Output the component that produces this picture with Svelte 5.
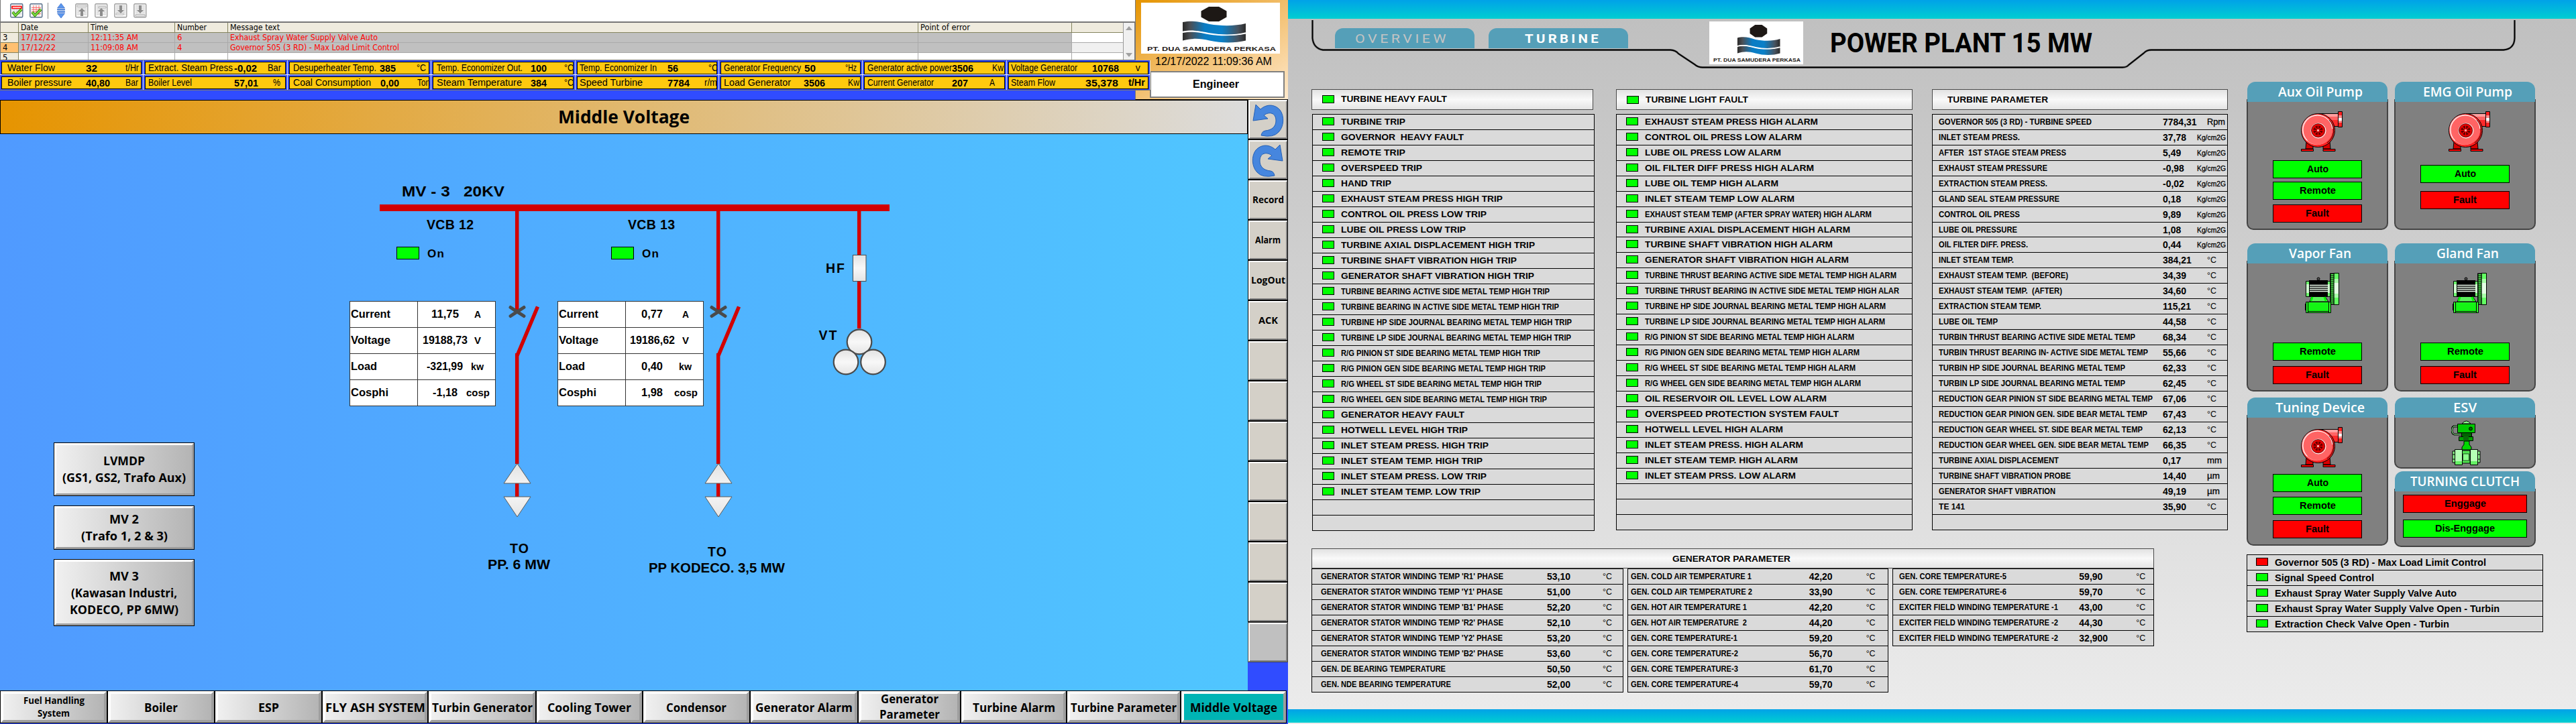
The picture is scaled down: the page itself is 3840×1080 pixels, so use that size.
<script>
  // Stretches a label horizontally to the given width in pixels.
  function fit(node, width) {
    if (!width) return;
    const natural = node.getBoundingClientRect().width;
    if (!natural) return;
    node.style.transform = `scaleX(${width / natural})`;
    node.style.marginRight = `${width - natural}px`;
  }

  // left edge, label, width, value x, value, width, unit x, unit, width
  const status = [
    [2, 11, 'Water Flow', 71, 128, '32', 17, 187, 't/Hr', 20],
    [216, 221, 'Extract. Steam Press', 126, 349, '-0,02', 34, 399, 'Bar', 20],
    [431, 437, 'Desuperheater Temp.', 124, 566, '385', 24, 621, '°C', 14],
    [645, 651, 'Temp. Economizer Out.', 128, 791, '100', 24, 841, '°C', 14],
    [860, 864, 'Temp. Economizer In', 115, 995, '56', 16, 1056, '°C', 14],
    [1074, 1079, 'Generator Frequency', 115, 1199, '50', 17, 1260, '°Hz', 17],
    [1288, 1293, 'Generator active power', 126, 1419, '3506', 32, 1479, 'Kw', 17],
    [1503, 1507, 'Voltage Generator', 99, 1628, '10768', 40, 1693, 'v', 7],
    [2, 11, 'Boiler pressure', 96, 128, '40,80', 36, 187, 'Bar', 19],
    [216, 221, 'Boiler Level', 65, 349, '57,01', 36, 407, '%', 11],
    [431, 437, 'Coal Consumption', 116, 567, '0,00', 28, 622, 'Ton', 19],
    [645, 651, 'Steam Temperature', 127, 791, '384', 24, 841, '°C', 14],
    [860, 864, 'Speed Turbine', 94, 995, '7784', 33, 1050, 'r/m', 19],
    [1074, 1079, 'Load Generator', 100, 1198, '3506', 32, 1264, 'Kw', 17],
    [1288, 1293, 'Current Generator', 99, 1419, '207', 24, 1475, 'A', 8],
    [1503, 1507, 'Steam Flow', 66, 1618, '35,378', 49, 1682, 't/Hr', 25]
  ];

  const sideButtons = ['undo', 'redo', 'Record', 'Alarm', 'LogOut', 'ACK', '', '', '', '', '', '', '', ''];
  const sideWidths = { Record: 47, Alarm: 38, LogOut: 51, ACK: 29 };

  const nav = [
    [160, ['Fuel Handling', 'System'], [91, 48]],
    [160, ['Boiler'], [50]],
    [160, ['ESP'], [31]],
    [158, ['FLY ASH SYSTEM'], [149]],
    [161, ['Turbin Generator'], [150]],
    [159, ['Cooling Tower'], [125]],
    [160, ['Condensor'], [90]],
    [161, ['Generator Alarm'], [145]],
    [153, ['Generator', 'Parameter'], [86, 90]],
    [158, ['Turbine Alarm'], [123]],
    [170, ['Turbine Parameter'], [158]],
    [158, ['Middle Voltage'], [130]]
  ];

  const menu = [
    [80, [['LVMDP', 62], ['(GS1, GS2, Trafo Aux)', 184]]],
    [66, [['MV 2', 44], ['(Trafo 1, 2 & 3)', 129]]],
    [100, [['MV 3', 44], ['(Kawasan Industri,', 158], ['KODECO, PP 6MW)', 162]]]
  ];

  const meters = [
    ['m1', [['Current', 59, '11,75', 41, 'A', 10], ['Voltage', 59, '19188,73', 67, 'V', 10], ['Load', 39, '-321,99', 54, 'kw', 19], ['Cosphi', 56, '-1,18', 37, 'cosp', 35]]],
    ['m2', [['Current', 59, '0,77', 32, 'A', 10], ['Voltage', 59, '19186,62', 67, 'V', 10], ['Load', 39, '0,40', 32, 'kw', 19], ['Cosphi', 56, '1,98', 32, 'cosp', 35]]]
  ];

  // label, width, narrow type
  const heavy = [
    ['TURBINE TRIP', 96], ['GOVERNOR  HEAVY FAULT', 183], ['REMOTE TRIP', 96], ['OVERSPEED TRIP', 121], ['HAND TRIP', 75],
    ['EXHAUST STEAM PRESS HIGH TRIP', 241], ['CONTROL OIL PRESS LOW TRIP', 217], ['LUBE OIL PRESS LOW TRIP', 186],
    ['TURBINE AXIAL DISPLACEMENT HIGH TRIP', 289], ['TURBINE SHAFT VIBRATION HIGH TRIP', 262], ['GENERATOR SHAFT VIBRATION HIGH TRIP', 288],
    ['TURBINE BEARING ACTIVE SIDE METAL TEMP HIGH TRIP', 311, 1], ['TURBINE BEARING IN ACTIVE SIDE METAL TEMP HIGH TRIP', 325, 1],
    ['TURBINE HP SIDE JOURNAL BEARING METAL TEMP HIGH TRIP', 344, 1], ['TURBINE LP SIDE JOURNAL BEARING METAL TEMP HIGH TRIP', 343, 1],
    ['R/G PINION ST SIDE BEARING METAL TEMP HIGH TRIP', 297, 1], ['R/G PINION GEN SIDE BEARING METAL TEMP HIGH TRIP', 305, 1],
    ['R/G WHEEL ST SIDE BEARING METAL TEMP HIGH TRIP', 299, 1], ['R/G WHEEL GEN SIDE BEARING METAL TEMP HIGH TRIP', 307, 1],
    ['GENERATOR HEAVY FAULT', 184], ['HOTWELL LEVEL HIGH TRIP', 189], ['INLET STEAM PRESS. HIGH TRIP', 220],
    ['INLET STEAM TEMP. HIGH TRIP', 211], ['INLET STEAM PRESS. LOW TRIP', 217], ['INLET STEAM TEMP. LOW TRIP', 208], null, null
  ];
  const light = [
    ['EXHAUST STEAM PRESS HIGH ALARM', 258], ['CONTROL OIL PRESS LOW ALARM', 234], ['LUBE OIL PRESS LOW ALARM', 203],
    ['OIL FILTER DIFF PRESS HIGH ALARM', 252], ['LUBE OIL TEMP HIGH ALARM', 199], ['INLET STEAM TEMP LOW ALARM', 223],
    ['EXHAUST STEAM TEMP (AFTER SPRAY WATER) HIGH ALARM', 338, 1], ['TURBINE AXIAL DISPLACEMENT HIGH ALARM', 306],
    ['TURBINE SHAFT VIBRATION HIGH ALARM', 280], ['GENERATOR SHAFT VIBRATION HIGH ALARM', 304],
    ['TURBINE THRUST BEARING ACTIVE SIDE METAL TEMP HIGH ALARM', 375, 1], ['TURBINE THRUST BEARING IN ACTIVE SIDE METAL TEMP HIGH ALAR', 379, 1],
    ['TURBINE HP SIDE JOURNAL BEARING METAL TEMP HIGH ALARM', 359, 1], ['TURBINE LP SIDE JOURNAL BEARING METAL TEMP HIGH ALARM', 358, 1],
    ['R/G PINION ST SIDE BEARING METAL TEMP HIGH ALARM', 312, 1], ['R/G PINION GEN SIDE BEARING METAL TEMP HIGH ALARM', 320, 1],
    ['R/G WHEEL ST SIDE BEARING METAL TEMP HIGH ALARM', 314, 1], ['R/G WHEEL GEN SIDE BEARING METAL TEMP HIGH ALARM', 322, 1],
    ['OIL RESERVOIR OIL LEVEL LOW ALARM', 271], ['OVERSPEED PROTECTION SYSTEM FAULT', 289], ['HOTWELL LEVEL HIGH ALARM', 206],
    ['INLET STEAM PRESS. HIGH ALARM', 236], ['INLET STEAM TEMP. HIGH ALARM', 228], ['INLET STEAM PRSS. LOW ALARM', 225], null, null, null
  ];
  const K = 'Kg/cm2G', C = '°C';
  const unitWidths = { [K]: 43, [C]: 14, Rpm: 27, mm: 22, 'µm': 19 };
  const params = [
    ['GOVERNOR 505 (3 RD) - TURBINE SPEED', 228, '7784,31', 'Rpm'], ['INLET STEAM PRESS.', 121, '37,78', K], ['AFTER  1ST STAGE STEAM PRESS', 190, '5,49', K],
    ['EXHAUST STEAM PRESSURE', 162, '-0,98', K], ['EXTRACTION STEAM PRESS.', 162, '-0,02', K], ['GLAND SEAL STEAM PRESSURE', 180, '0,18', K],
    ['CONTROL OIL PRESS', 121, '9,89', K], ['LUBE OIL PRESSURE', 117, '1,08', K], ['OIL FILTER DIFF. PRESS.', 133, '0,44', K],
    ['INLET STEAM TEMP.', 112, '384,21', C], ['EXHAUST STEAM TEMP.  (BEFORE)', 193, '34,39', C], ['EXHAUST STEAM TEMP.  (AFTER)', 184, '34,60', C],
    ['EXTRACTION STEAM TEMP.', 153, '115,21', C], ['LUBE OIL TEMP', 88, '44,58', C], ['TURBIN THRUST BEARING ACTIVE SIDE METAL TEMP', 293, '68,34', C],
    ['TURBIN THRUST BEARING IN- ACTIVE SIDE METAL TEMP', 312, '55,66', C], ['TURBIN HP SIDE JOURNAL BEARING METAL TEMP', 278, '62,33', C],
    ['TURBIN LP SIDE JOURNAL BEARING METAL TEMP', 278, '62,45', C], ['REDUCTION GEAR PINION ST SIDE BEARING METAL TEMP', 319, '67,06', C],
    ['REDUCTION GEAR PINION GEN. SIDE BEAR METAL TEMP', 311, '67,43', C], ['REDUCTION GEAR WHEEL ST. SIDE BEAR METAL TEMP', 304, '62,13', C],
    ['REDUCTION GEAR WHEEL GEN. SIDE BEAR METAL TEMP', 313, '66,35', C], ['TURBINE AXIAL DISPLACEMENT', 179, '0,17', 'mm'],
    ['TURBINE SHAFT VIBRATION PROBE', 197, '14,40', 'µm'], ['GENERATOR SHAFT VIBRATION', 174, '49,19', 'µm'], ['TE 141', 39, '35,90', C], null
  ];
  const generator = [
    ['ga', [["GENERATOR STATOR WINDING TEMP 'R1' PHASE", 272, '53,10'], ["GENERATOR STATOR WINDING TEMP 'Y1' PHASE", 271, '51,00'],
      ["GENERATOR STATOR WINDING TEMP 'B1' PHASE", 272, '52,20'], ["GENERATOR STATOR WINDING TEMP 'R2' PHASE", 272, '52,10'],
      ["GENERATOR STATOR WINDING TEMP 'Y2' PHASE", 271, '53,20'], ["GENERATOR STATOR WINDING TEMP 'B2' PHASE", 272, '53,60'],
      ['GEN. DE BEARING TEMPERATURE', 186, '50,50'], ['GEN. NDE BEARING TEMPERATURE', 194, '52,00']]],
    ['gb', [['GEN. COLD AIR TEMPERATURE 1', 180, '42,20'], ['GEN. COLD AIR TEMPERATURE 2', 181, '33,90'], ['GEN. HOT AIR TEMPERATURE 1', 173, '42,20'],
      ['GEN. HOT AIR TEMPERATURE  2', 173, '44,20'], ['GEN. CORE TEMPERATURE-1', 159, '59,20'], ['GEN. CORE TEMPERATURE-2', 160, '56,70'],
      ['GEN. CORE TEMPERATURE-3', 160, '61,70'], ['GEN. CORE TEMPERATURE-4', 160, '59,70']]],
    ['gc', [['GEN. CORE TEMPERATURE-5', 160, '59,90'], ['GEN. CORE TEMPERATURE-6', 160, '59,70'], ['EXCITER FIELD WINDING TEMPERATURE -1', 237, '43,00'],
      ['EXCITER FIELD WINDING TEMPERATURE -2', 237, '44,30'], ['EXCITER FIELD WINDING TEMPERATURE -2', 237, '32,900']]]
  ];

  // title, width, icon, body height, space below, buttons: label, width, gap above, on
  const R = 'Remote', A = 'Auto', F = 'Fault';
  const cards = [
    [
      ['Aux Oil Pump', 126, 'pump', 195, 20, [[A, 32, 13, 1], [R, 54, 5, 1], [F, 35, 7, 0]]],
      ['Vapor Fan', 93, 'fan', 195, 9, [[R, 54, 44, 1], [F, 35, 8, 0]]],
      ['Tuning Device', 133, 'pump', 195, 0, [[A, 32, 10, 1], [R, 54, 7, 1], [F, 35, 8, 0]]]
    ],
    [
      ['EMG Oil Pump', 133, 'pump', 195, 20, [[A, 32, 20, 1], [F, 35, 12, 0]]],
      ['Gland Fan', 93, 'fan', 195, 9, [[R, 54, 44, 1], [F, 35, 8, 0]]],
      ['ESV', 35, 'valve', 80, 4, []],
      ['TURNING CLUTCH', 163, 'clutch', 87, 0, [['Enggage', 62, 9, 0], ['Dis-Enggage', 89, 10, 1]]]
    ]
  ];
  const notes = [
    ['Governor 505 (3 RD) - Max Load Limit Control', 315, 0], ['Signal Speed Control', 148, 1], ['Exhaust Spray Water Supply Valve Auto', 271, 1],
    ['Exhaust Spray Water Supply Valve Open - Turbin', 335, 1], ['Extraction Check Valve Open - Turbin', 260, 1]
  ];
</script>

{#snippet t(text, w)}<span class="t" use:fit={w}>{text}</span>{/snippet}

{#snippet logo(id)}
  <svg class="logo" viewBox="0 0 207 76" preserveAspectRatio="none">
    <defs>
      <linearGradient id={id}>
        <stop offset="0" stop-color="#2b2a29" /><stop offset=".12" stop-color="#4a4f55" /><stop offset=".35" stop-color="#0a7cc4" />
        <stop offset=".62" stop-color="#0a80c8" /><stop offset=".88" stop-color="#47525e" /><stop offset="1" stop-color="#2b2a29" />
      </linearGradient>
    </defs>
    <rect width="207" height="76" fill="#fff" />
    <path d="M101 6h15l11.500 6.500v9l-11.500 6.500h-15l-11.500-6.500v-9z" fill="#1d1815" />
    <path d="M62 29c16-3 26 0 40 3c18 3 38 3 54-1v14c-16 4-36 4-54 1c-14-3-24-6-40-3z" fill="url(#{id})" />
    <path d="M62 45c16-3 26 0 40 2.500c18 3 38 2 54-1v10c-16 4-36 4-54 0c-14-3-24-4-40 0z" fill="url(#{id})" />
    <path d="M62 43.500c16-3 26 0 40 2.500c18 3 38 3 54-1" fill="none" stroke="#fff" stroke-width="1.600" />
    <text x="9" y="71.500" textLength="192" lengthAdjust="spacingAndGlyphs">PT. DUA SAMUDERA PERKASA</text>
  </svg>
{/snippet}

{#snippet pump()}
  <svg class="pump" width="62" height="60" viewBox="0 0 62 60">
    <path d="M8 45l-1 11h11v-5zM43 45l1 11H33v-5z" fill="#d80000" stroke="#000" />
    <path d="M.5 56.500h18v3H.5zM33 56.500h18v3H33z" fill="#f00" stroke="#000" />
    <path d="M26 3.500h30v19H47z" fill="#ff2a2a" stroke="#000" />
    <path d="M30 4h25v4H36z" fill="#ffa0a0" /><path d="M36 8h19v5H42z" fill="#ff6464" />
    <circle cx="25.500" cy="28.500" r="25" fill="#f22" stroke="#000" />
    <circle cx="24" cy="27.500" r="22.800" fill="#ffa4a4" />
    <circle cx="25" cy="28" r="22" fill="#ff6464" stroke="#fff" stroke-dasharray="84 60" transform="rotate(135 25 28)" />
    <path d="M42 13a22 22 0 0 1-3 34" fill="none" stroke="#000" stroke-width=".8" />
    <circle cx="26" cy="29" r="11" fill="none" stroke="#fff" />
    <circle cx="25.500" cy="28.500" r="10" fill="#e60000" stroke="#000" stroke-width=".6" />
    <circle cx="25.500" cy="28.500" r="7" fill="#640000" />
    <path d="M18 28.500h15M25.500 21v15M20 23l11 11M31 23L20 34" stroke="#f00" stroke-width="1.100" />
    <path d="M24 27h3v3h-3z" fill="#ffa0a0" />
    <path d="M55.500.5h6v23h-6z" fill="#f22" stroke="#000" /><path d="M56 6h5v11h-5z" fill="#ff8a8a" /><path d="M56 10h5v4h-5z" fill="#fff" />
  </svg>
{/snippet}

{#snippet fan()}
  <svg class="fan" width="51" height="60" viewBox="0 0 51 60">
    <circle cx="20" cy="9" r="2" fill="#555" stroke="#000" />
    <path d="M1.500 12.500h37v23h-37z" fill="#6cff6c" stroke="#000" /><path d="M2 17h35v13H2z" fill="#d2ffd2" />
    <path d="M6 11h28v24H6z" fill="#000" /><path d="M7 18.500h27M7 21.500h27M7 24.500h27M7 27.500h27" stroke="#f0fff0" stroke-width="1.600" />
    <path d="M10 35.500h20l5 7.500H7z" fill="#5cf05c" stroke="#000" /><path d="M11 36l-2 6M29 36l2 6" stroke="#0f0" stroke-width="3" />
    <path d="M43 .5h7.500v47H43z" fill="#64ff64" stroke="#000" /><path d="M43.500 9H50v28h-6.500z" fill="#a8ffa8" /><path d="M43.500 15H50v16h-6.500z" fill="#e4ffe4" />
    <path d="M37 .5h6.500v47H37z" fill="#000" /><path d="M40.500 2v44" stroke="#4be04b" stroke-width="4" stroke-dasharray="2 1" />
    <path d="M1.500 43.500h37v16h-37z" fill="#2bff2b" stroke="#000" /><path d="M4.500 44v15M35.500 44v15M5 57.500h30M.5 46v10" stroke="#000" />
    <path d="M5 45h30v12H5z" fill="#14f514" />
  </svg>
{/snippet}

{#snippet valve()}
  <svg class="valve" width="44" height="67" viewBox="0 0 44 67">
    <path d="M16 5q6.500-8 13 0z" fill="#8cff8c" stroke="#000" />
    <path d="M9 9H4q-3 1-3 6t4 6h11" fill="none" stroke="#000" stroke-width="3" /><path d="M9 9H4q-3 1-3 6t4 6h11" fill="none" stroke="#9f9" />
    <path d="M9.500 5.500h26v13h-26z" fill="#00c800" stroke="#000" /><circle cx="29" cy="12.500" r="2.500" fill="#006400" stroke="#000" />
    <path d="M15.500 18.500h15v6h-15z" fill="#006400" stroke="#000" /><path d="M11.500 24.500h21v6h-21z" fill="#00a000" stroke="#000" />
    <path d="M18 24h8v7h-8z" fill="#0a6a0a" />
    <path d="M19 31h8v5l3 4v4H16v-4l3-4z" fill="#00d800" stroke="#000" />
    <path d="M2 46h4v17H2zM38 46h5v17h-5z" fill="#8cff8c" stroke="#000" /><path d="M2 51h4M2 58h4M38 51h5M38 58h5" stroke="#000" />
    <path d="M16 45h12v19H16z" fill="#50e650" stroke="#000" /><path d="M17.500 50h9v10h-9z" fill="#8cff8c" stroke="#000" stroke-width=".7" />
    <path d="M5.500 43.500h11v23h-11zM28.500 43.500h11v23h-11z" fill="#b4ffb4" stroke="#000" /><path d="M6 61h10v5H6zM29 61h10v5H29z" fill="#64f064" />
  </svg>
{/snippet}

{#snippet sheet(kind)}
  <svg class="sheet" width="20" height="22" viewBox="0 0 20 22">
    <rect x=".8" y=".8" width="18" height="20" rx="1.500" fill="#f4f4f4" stroke={kind[0] === 'c' ? '#58708c' : '#a2a2a2'} stroke-width="1.400" />
    {#if kind[0] === 'c'}
      <path d="M3 6.500h14M3 9.500h14M3 12.500h14M3 15.500h14M6 3v15M10 3v15M14 3v15" stroke={kind === 'call' ? '#ff5050' : '#c8ccd4'} stroke-width=".8" />
      {#if kind === 'cone'}<path d="M3 4.500h14v3H3z" fill="#fff" stroke="#f00" stroke-width="1.500" />{/if}
      <path d="M4 13l4 5L17 9" fill="none" stroke="#2b7a10" stroke-width="4" /><path d="M4 13l4 5L17 9" fill="none" stroke="#7ddc3c" stroke-width="2.200" />
    {:else}
      <path d="M3 4h14M3 7h14M3 10h4M13 10h4M3 13h4M13 13h4M3 16h14" stroke="#bdbdbd" stroke-width=".9" />
      {#if kind === 'top' || kind === 'up'}<path d="M10 7l5 5h-3v7H8v-7H5z" fill="#8c8c8c" />{:else}<path d="M10 15L5 10h3V3h4v7h3z" fill="#8c8c8c" />{/if}
      <path d={kind === 'top' ? 'M3 3h14v2H3z' : kind === 'up' ? 'M6 5h11v2H6z' : kind === 'down' ? 'M3 15h11v2H3z' : 'M3 17h14v2H3z'} fill="#fff" stroke="#999" stroke-width=".7" />
    {/if}
  </svg>
{/snippet}

<div class="wall">
  <section class="left">
    <div class="top">
      <div class="log">
        <div class="tools">
          {@render sheet('cone')}{@render sheet('call')}
          <i class="bar"></i>
          <svg class="move" width="12" height="22" viewBox="0 0 12 22"><path d="M6 0l5.500 7H.5zM6 22l5.500-7H.5zM.5 8.500h11v1.600H.5zM.5 11.800h11v1.600H.5z" fill="#5a96ee" stroke="#2a60c0" stroke-width=".6" /></svg>
          {@render sheet('top')}{@render sheet('up')}{@render sheet('down')}{@render sheet('end')}
        </div>
        <div class="logbody">
          <div class="rows">
            <div class="row hd"><b></b><b>{@render t('Date', 26)}</b><b>{@render t('Time', 26)}</b><b>{@render t('Number', 44)}</b><b>{@render t('Message text', 74)}</b><b>{@render t('Point of error', 74)}</b><b></b></div>
            <div class="row red"><b>3</b><b>{@render t('17/12/22', 52)}</b><b>{@render t('12:11:35 AM', 71)}</b><b>6</b><b>{@render t('Exhaust Spray Water Supply Valve Auto', 220)}</b><b></b><b></b></div>
            <div class="row red sel"><b>4</b><b>{@render t('17/12/22', 52)}</b><b>{@render t('11:09:08 AM', 71)}</b><b>4</b><b>{@render t('Governor 505 (3 RD) - Max Load Limit Control', 252)}</b><b></b><b></b></div>
            <div class="row last"><b>5</b><b></b><b></b><b></b><b></b><b></b><b></b></div>
          </div>
          <div class="scroll"><i class="up"></i><i class="down"></i></div>
        </div>
      </div>
      <div class="brand">
        {@render logo('waveA')}
        <div class="date">{@render t('12/17/2022 11:09:36 AM', 174)}</div>
        <div class="user">{@render t('Engineer', 69)}</div>
      </div>
      <div class="status">
        {#each status as [x, lx, label, lw, vx, value, vw, ux, unit, uw], i}
          <div class="slot">
            <div class="cell" class:strong={i === 15} style="padding-left:{lx - x - 1}px;grid-template-columns:{vx - lx}px {ux - vx}px auto">
              <span>{@render t(label, lw)}</span><strong>{@render t(value, vw)}</strong><em>{@render t(unit, uw)}</em>
            </div>
          </div>
        {/each}
      </div>
    </div>

    <div class="middle">
      <div class="stage">
        <h1>{@render t('Middle Voltage', 196)}</h1>
        <div class="canvas">
          <svg class="diagram" width="1860" height="830" viewBox="0 200 1860 830">
            <defs><linearGradient id="metal" x1="0" x2="0" y1="0" y2="1"><stop offset="0" stop-color="#e2e2e2" /><stop offset=".5" stop-color="#f8f8f8" /><stop offset="1" stop-color="#e4e4e4" /></linearGradient></defs>
            <rect x="566" y="305" width="760" height="10" fill="#d20000" />
            {#each [0, 300] as dx}
              <g transform="translate({dx} 0)">
                <path d="M770.700 315V463M801.500 457.500L770.700 531M770.700 527V692M770.700 721v20" fill="none" stroke="#d20000" stroke-width="5.500" />
                <path d="M761 458.500l20 13M781 458.500l-20 13" stroke="#4a4a4a" stroke-width="5" stroke-linecap="round" />
                <path d="M771 691.500l20 29.500h-40zM751 741h40L771 771z" fill="url(#metal)" stroke="#5a5a5a" />
              </g>
            {/each}
            <path d="M1280.700 315v65M1280.700 420v70" stroke="#d20000" stroke-width="5.500" />
            <rect x="1271.500" y="380.500" width="19.500" height="39" fill="url(#metal)" stroke="#4a4a4a" />
            <g fill="url(#metal)" stroke="#4a4a4a" stroke-width="2.200"><circle cx="1281" cy="510" r="18.300" /><circle cx="1261" cy="540" r="18.300" /><circle cx="1301.500" cy="540" r="18.300" /></g>
            <g fill="#0f0" stroke="#000"><rect x="591.500" y="368.500" width="33" height="18" /><rect x="911.500" y="368.500" width="33" height="18" /></g>
            <g font-size="22"><text x="599" y="293" textLength="153" lengthAdjust="spacingAndGlyphs">MV - 3   20KV</text></g>
            <g font-size="19.500">
              <text x="636" y="342" textLength="70">VCB 12</text><text x="936" y="342" textLength="70">VCB 13</text>
              <text x="1231" y="407" textLength="28">HF</text><text x="1220.500" y="506.500" textLength="27">VT</text>
              <text x="760" y="824.500" textLength="28">TO</text><text x="727" y="849" textLength="93" lengthAdjust="spacingAndGlyphs">PP. 6 MW</text>
              <text x="1055" y="829.500" textLength="28">TO</text><text x="967" y="854" textLength="203" lengthAdjust="spacingAndGlyphs">PP KODECO. 3,5 MW</text>
            </g>
            <g font-size="17"><text x="637" y="384" textLength="25">On</text><text x="957" y="384" textLength="25">On</text></g>
          </svg>
          {#each meters as [cls, rows]}
            <div class="meter {cls}">
              {#each rows as [label, lw, value, vw, unit, uw]}
                <div><span>{@render t(label, lw)}</span><span>{@render t(value, vw)}</span><span>{@render t(unit, uw)}</span></div>
              {/each}
            </div>
          {/each}
          <div class="menu">
            {#each menu as [h, lines]}
              <button style="height:{h}px">{#each lines as [text, w]}<div>{@render t(text, w)}</div>{/each}</button>
            {/each}
          </div>
        </div>
      </div>
      <div class="side">
        {#each sideButtons as s, i}
          <div class="key" class:dim={i === 13}>
            {#if s === 'undo' || s === 'redo'}
              <svg class={s} width="52" height="52" viewBox="0 0 52 52"><path d="M8 4l-4 24 22-3-6-5c8-6 18-4 18 8c0 8-5 14-16 15q-5 1-6 7q18 4 26-5c8-8 9-24 2-33c-8-9-20-9-29-1z" fill="#4686de" stroke="#2560b4" /></svg>
            {:else if s}{@render t(s, sideWidths[s])}{/if}
          </div>
        {/each}
      </div>
    </div>

    <div class="nav">
      {#each nav as [w, lines, widths], i}
        <button class:active={i === 11} class:small={i === 0} class:two={i === 8} style="width:{w}px">{#each lines as line, j}<div>{@render t(line, widths[j])}</div>{/each}</button>
      {/each}
    </div>
  </section>

  <section class="right">
    <div class="band tall"></div>
    <header>
      <svg class="frame" width="1920" height="94" viewBox="0 28 1920 94">
        <path d="M36.500 30V57Q38 72 52 74.500H570Q578 75 582 80L606 96Q611 100.500 618 100.500H1244Q1250 100.500 1253 97L1276 79Q1280 74.500 1287 74.500H1812Q1828 73 1828.500 57V30" fill="none" stroke="#777" stroke-width="3" />
        <path d="M36.500 30V57Q38 72 52 74.500H570Q578 75 582 80L606 96Q611 100.500 618 100.500H1244Q1250 100.500 1253 97L1276 79Q1280 74.500 1287 74.500H1812Q1828 73 1828.500 57V30" fill="none" stroke="#000" stroke-width="1.800" />
      </svg>
      <div class="tab">{@render t('OVERVIEW', 140)}</div>
      <div class="tab on">{@render t('TURBINE', 114)}</div>
      <div class="mark">{@render logo('waveB')}</div>
      <h2>{@render t('POWER PLANT 15 MW', 391)}</h2>
    </header>

    <div class="content">
      <div class="tables">
        <div class="trio">
          {#each [['heavy', 'TURBINE HEAVY FAULT', 158, heavy], ['light', 'TURBINE LIGHT FAULT', 153, light]] as [cls, title, w, rows]}
            <div class="col {cls}">
              <div class="cap"><i class="lamp"></i>{@render t(title, w)}</div>
              <div class="grid">
                {#each rows as r}
                  <div class="line" class:narrow={r?.[2]}>{#if r}<i class="lamp"></i>{@render t(r[0], r[1])}{/if}</div>
                {/each}
              </div>
            </div>
          {/each}
          <div class="col param">
            <div class="cap">{@render t('TURBINE PARAMETER', 150)}</div>
            <div class="grid">
              {#each params as r}
                <div class="line">
                  {#if r}<span>{@render t(r[0], r[1])}</span><strong>{r[2]}</strong><em class:tiny={r[3] === K} class:deg={r[3] === C}>{@render t(r[3], unitWidths[r[3]])}</em>{/if}
                </div>
              {/each}
            </div>
          </div>
        </div>
        <div class="gen">
          <div class="cap">{@render t('GENERATOR PARAMETER', 176)}</div>
          <div class="gens">
            {#each generator as [cls, rows]}
              <div class="grid {cls}">
                {#each rows as [label, w, value]}
                  <div class="line"><span>{@render t(label, w)}</span><strong>{value}</strong><em class="deg">°C</em></div>
                {/each}
              </div>
            {/each}
          </div>
        </div>
      </div>

      <div class="devices">
        <div class="pair">
          {#each cards as column}
            <div class="stack">
              {#each column as [title, tw, icon, h, after, buttons]}
                <div class="card" style="margin-bottom:{after}px">
                  <div class="name" class:mid={icon === 'clutch' || icon === 'valve'}>{@render t(title, tw)}</div>
                  <div class="case {icon}" style="height:{h}px">
                    {#if icon === 'pump'}{@render pump()}{:else if icon === 'fan'}{@render fan()}{:else if icon === 'valve'}{@render valve()}{/if}
                    {#each buttons as [label, w, gap, on]}
                      <div class="btn" class:on class:wide={icon === 'clutch'} style="margin-top:{gap}px">{@render t(label, w)}</div>
                    {/each}
                  </div>
                </div>
              {/each}
            </div>
          {/each}
        </div>
        <div class="grid notes">
          {#each notes as [text, w, on]}
            <div class="line"><i class="lamp" class:off={!on}></i>{@render t(text, w)}</div>
          {/each}
        </div>
      </div>
    </div>
    <div class="band"></div>
  </section>
</div>

<style>
  :global(body) { overflow: hidden; background: #ebebeb; }
  * { box-sizing: border-box; }
  .wall { display: flex; width: 3840px; height: 1080px; font-family: "Liberation Sans", Arial, sans-serif; color: #000; }
  section { width: 1920px; height: 1080px; overflow: hidden; display: flex; flex-direction: column; }
  .t { display: inline-block; white-space: pre; transform-origin: 0 50%; flex: none; }
  h1, h2 { margin: 0; }
  svg { display: block; flex: none; }
  b, em { font-weight: 400; font-style: normal; }
  button { font-family: "Open Sans", "Noto Sans", sans-serif; font-weight: 700; color: #000; padding: 0; }

  .left { background: #304cff; }
  .top { height: 149px; display: grid; grid-template-columns: 1692px 228px; grid-template-rows: 90px 59px; position: relative; }
  .log { background: #fff; border-left: 1px solid #777; display: flex; flex-direction: column; }
  .tools { height: 32px; display: flex; padding: 5px 0 0 14px; }
  .sheet { margin-right: 9px; }
  .bar { width: 1px; height: 24px; background: #888; margin: -1px 13px 0 -2px; }
  .move { margin: 0 15px 0 0; }
  .logbody { flex: 1; display: flex; border-top: 2px solid #777; border-bottom: 1px solid #777; font: 13px/14px "DejaVu Sans Condensed", "DejaVu Sans", sans-serif; overflow: hidden; }
  .rows { width: 1673px; }
  .row { display: grid; grid-template-columns: 27px 104px 129px 79px 1029px 229px 76px; height: 15px; }
  .row b { border-right: 1px solid #aaa; border-bottom: 1px solid #aaa; padding-left: 3px; overflow: hidden; height: 15px; white-space: nowrap; }
  .row b:last-child { border-right: 0; }
  .hd b { background: #efebde; border-color: #84845f; }
  .red { color: #f00; }
  .red b { background: #c0c0c0; }
  .row:not(.hd) b:first-child { color: #000; background: #efebde; border-color: #84845f; }
  .red b:last-child { background: #fff; }
  .sel b:last-child { background: #f0f0f0; }
  .row.sel b:first-child { background: #ffc070; }
  .scroll { width: 18px; background: #f0f0f0; border-left: 1px solid #999; border-right: 1px solid #777; display: flex; flex-direction: column; justify-content: space-between; align-items: center; padding: 5px 0 4px; }
  .scroll i { border: 5px solid transparent; border-top-width: 0; border-bottom: 6px solid #a0a0a0; }
  .scroll .down { transform: rotate(180deg); }
  .brand { grid-row: 1 / 3; grid-column: 2; background: linear-gradient(150deg, #e59400 0, #f2be6c 48%, #ffe9cc 100%); padding: 4px 0 0 8px; border-left: 1px solid #777; border-bottom: 1px solid #000; }
  .logo { width: 207px; height: 76px; }
  .logo text { font: 700 9px "Liberation Sans", sans-serif; fill: #1d1815; }
  .date { font-size: 16px; line-height: 22px; padding-left: 21px; margin-top: 1px; }
  .user { margin: 3px 0 0 13px; width: 201px; height: 40px; background: #fff; border: 2px solid #808080; font: 700 16px/36px "Liberation Sans", sans-serif; text-align: center; padding-right: 4px; }
  .status { position: absolute; left: 0; top: 90px; width: 1715px; height: 45px; display: grid; grid-template-columns: repeat(8, 1fr); background: #304cff; border-bottom: 1px solid #777; }
  .slot { padding: 2px 2px 0; height: 22px; border-right: 1.500px solid #ddd; border-bottom: 1px solid #fff; min-width: 0; }
  .slot:nth-child(n + 9) { border-bottom: 0; }
  .cell { height: 19px; background: #ffc90e; border: 1px solid #000; display: grid; align-items: center; font-size: 14px; line-height: 17px; white-space: nowrap; }
  .cell strong { font-size: 15px; }
  .strong em { font-weight: 700; }

  .middle { display: flex; height: 881px; }
  .stage { width: 1860px; }
  h1 { height: 51px; border: 1px solid #000; background: linear-gradient(90deg, #e69400, #dcdcdc); font: 700 27px/47px "Open Sans", "Noto Sans", sans-serif; text-align: center; }
  .canvas { position: relative; height: 830px; background: linear-gradient(90deg, #509aff, #50c6ff); }
  .diagram { position: absolute; inset: 0; }
  .diagram text { font-family: "Liberation Sans", sans-serif; font-weight: 700; white-space: pre; }
  .meter { position: absolute; left: 521px; top: 249px; width: 218px; border: 1px solid #333; border-bottom: 0; background: #fff; font: 700 16px/38px "Liberation Sans", sans-serif; }
  .m2 { left: 831px; }
  .meter div { display: grid; grid-template-columns: 100px 81px 1fr; height: 39px; border-bottom: 1.500px solid #333; }
  .meter div > span:nth-child(2) { border-left: 1px solid #333; text-align: center; }
  .m2 div > span:nth-child(2) { padding-right: 2px; }
  .meter div > span:nth-child(3) { font-size: 14px; text-align: center; padding-right: 10px; margin-left: -8px; }
  .meter div > span:first-child { padding-left: 1px; }
  .menu { position: absolute; left: 80px; top: 460px; width: 210px; display: flex; flex-direction: column; gap: 14px; }
  .menu button { border: 4px solid; border-color: #fff #9e9e9e #9e9e9e #fff; outline: 1px solid #000; outline-offset: -1px; background: linear-gradient(90deg, #f0f0f0, #b4b4b4); font-size: 18px; line-height: 25px; }

  .side { width: 60px; margin-top: -1px; }
  .key { height: 60px; border: 2px solid; border-color: #fff #808080 #808080 #fff; outline: 1px solid #000; outline-offset: -1px; background: #d4d0c8; display: flex; align-items: center; justify-content: center; font: 700 14px/50px "Open Sans", sans-serif; box-shadow: inset 1px 1px #fff, inset -1px -1px #808080; padding-bottom: 1px; }
  .dim { background: #c0c0c0; outline-color: #444; }
  .redo { transform: scaleX(-1); }
  .nav { display: flex; height: 50px; padding-bottom: 1px; }
  .nav button { height: 49px; border: 5px solid; border-color: #fff #9e9e9e #9e9e9e #fff; outline: 1px solid #000; outline-offset: -1px; background: linear-gradient(90deg, #f0f0f0, #b4b4b4); font-size: 18px; line-height: 20px; white-space: nowrap; }
  .nav .small { font-size: 14px; line-height: 19px; padding-bottom: 2px; }
  .nav .two { line-height: 23px; padding-bottom: 2px; display: flex; flex-direction: column; justify-content: center; align-items: center; }
  .nav .active { background: #00b4b4; }

  .right { background: linear-gradient(180deg, #c0c0c0 28px, #ebebeb 1058px); }
  .band { height: 20px; flex: none; background: linear-gradient(180deg, #00a2e8, #00ced1); }
  .tall { height: 28px; }
  header { height: 94px; flex: none; display: flex; position: relative; padding-left: 70px; }
  .frame { position: absolute; left: 0; top: 0; }
  .tab { margin: 14px 21px 0 0; width: 208px; height: 30px; border-radius: 12px 12px 0 0; background: #559fb8; color: #c4c4c4; font: 19px/31px Roboto, sans-serif; letter-spacing: 4px; padding-left: 30px; position: relative; }
  .tab.on { color: #fff; font-weight: 700; padding-left: 54px; }
  .mark { margin: 4px 0 0 100px; position: relative; }
  .mark .logo { width: 140px; height: 64px; }
  h2 { font: 700 40px/74px Roboto, sans-serif; margin-left: 40px; }

  .content { display: flex; height: 936px; flex: none; padding-left: 35px; }
  .tables { width: 1394px; padding-top: 11px; }
  .trio { display: flex; }
  .col { width: 422px; }
  .light { width: 442px; margin-left: 32px; }
  .param { width: 441px; margin-left: 29px; }
  .cap { height: 31px; border: 1px solid #4a4a4a; background: linear-gradient(180deg, #e2e2e2, #f9f9f9 50%, #e4e4e4); display: flex; align-items: center; font: 700 13.500px "Liberation Sans", sans-serif; margin-bottom: 6px; padding-left: 15px; }
  .heavy .cap { width: 420px; padding-bottom: 2px; }
  .lamp { width: 18px; height: 12px; background: #0f0; border: 1px solid #000; margin-right: 10px; flex: none; }
  .off { background: #f00; }
  .grid { border: 1px solid #000; border-bottom: 0; background: #dadada; }
  .heavy .grid { margin-left: 1px; }
  .line { height: 23px; border-bottom: 1px solid #000; display: flex; align-items: center; padding-left: 14px; font: 700 13px/22px "Liberation Sans", sans-serif; white-space: nowrap; }
  .line .lamp { margin-top: -2px; }
  .narrow { font-size: 12.500px; }
  .light .line:nth-child(8), .param .line:nth-child(8) { height: 22px; }
  .param .cap { padding-left: 22px; }
  .param .line { display: grid; grid-template-columns: 334px 51px 1fr; padding-left: 9px; font-size: 12px; }
  .param strong, .gens strong { font-size: 14px; }
  .param em { font-weight: 400; font-size: 13px; padding-left: 15px; -webkit-text-stroke: .3px #000; }
  .param .tiny { font-size: 11px; padding-left: 0; }
  .line .deg { -webkit-text-stroke: 0; font-weight: 400; font-size: 12.500px; padding-left: 15px; }
  .gen { width: 1256px; padding-top: 26px; }
  .gen .cap { height: 30px; margin: 0; justify-content: center; padding: 0 4px 0 0; }
  .gens { display: flex; gap: 6px; align-items: flex-start; }
  .gens .line { display: grid; font-size: 12px; }
  .ga { width: 465px; }
  .gb, .gc { width: 390px; }
  .ga .line { padding-left: 13px; grid-template-columns: 337px 68px 1fr; }
  .gb .line { padding-left: 4px; grid-template-columns: 266px 70px 1fr; }
  .gc .line { padding-left: 9px; grid-template-columns: 268px 70px 1fr; }

  .pair { display: flex; gap: 9px; height: 705px; }
  .stack { width: 211px; }
  .name { height: 30px; width: 209px; margin-left: 1px; border-radius: 12px 12px 0 0; background: #559fb8; position: relative; color: #fff; text-align: center; font: 600 20px/29px "Open Sans", "Noto Sans", sans-serif; padding-left: 8px; }
  .name.mid { padding: 0; }
  .case { display: flow-root; margin-top: -4px; border: 2px solid #444; border-top: 0; border-radius: 0 0 10px 10px; background: #808080; padding-top: 18px; }
  .case.valve { padding-top: 8px; }
  .case.clutch { padding-top: 0; }
  svg.valve { margin-left: 83px; }
  svg.pump { margin-left: 79px; }
  svg.fan { margin-left: 85px; }
  .btn { width: 133px; height: 27px; margin: 0 auto; background: #f00; border: 1px solid #000; text-align: center; font: 700 14.500px/25px "Liberation Sans", sans-serif; }
  .btn.on { background: #0f0; }
  .btn.wide { width: 185px; }
  .notes { width: 442px; }
  .notes .line { font-size: 14px; padding-left: 13px; }
</style>
